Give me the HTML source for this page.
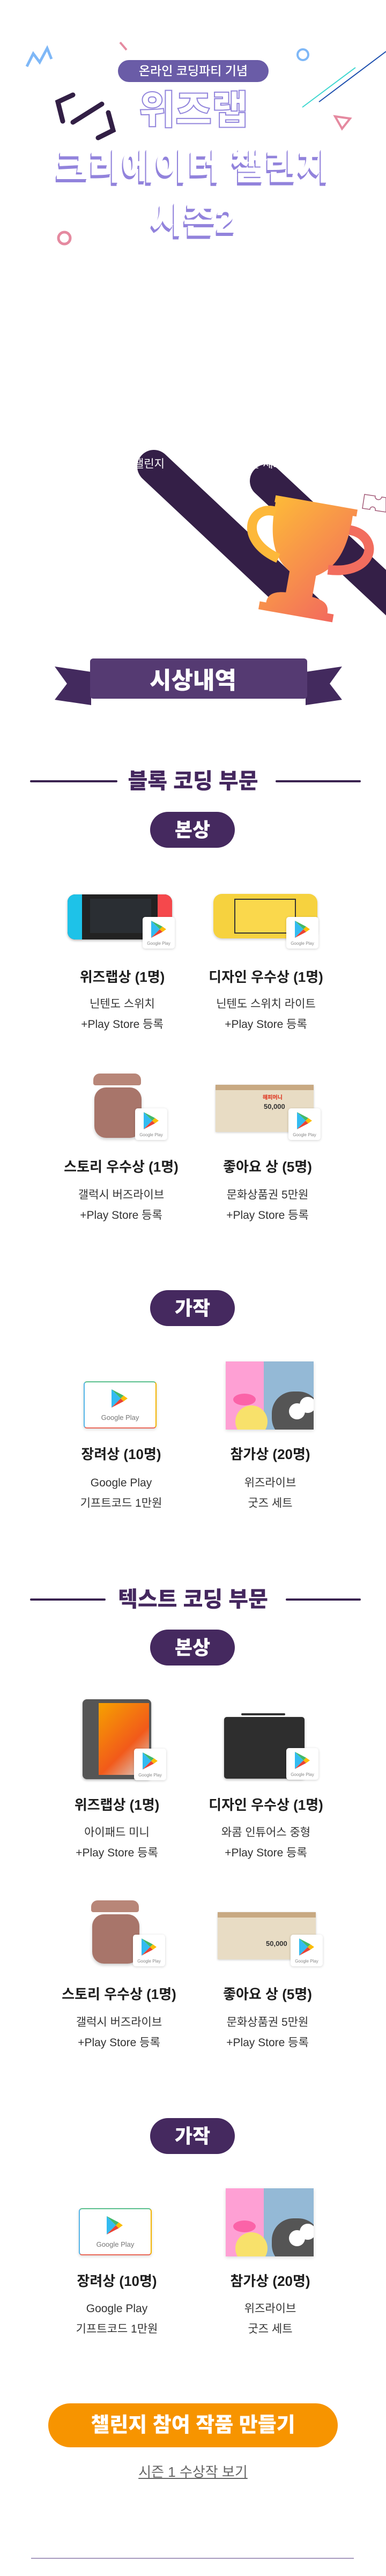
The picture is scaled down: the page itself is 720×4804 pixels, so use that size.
<!DOCTYPE html>
<html><head><meta charset="utf-8">
<style>
*{margin:0;padding:0;box-sizing:border-box}
body{width:720px;height:4804px;background:#fff;position:relative;overflow:hidden;font-family:"Liberation Sans","Noto Sans CJK KR",sans-serif}
.a{position:absolute}
.t{position:absolute;width:340px;text-align:center;font-weight:700;font-size:26px;line-height:34px;color:#1e1e1e;white-space:nowrap}
.d{position:absolute;width:340px;text-align:center;font-size:21px;line-height:38px;color:#333;white-space:nowrap}
.pill{position:absolute;left:280px;width:158px;height:67px;border-radius:34px;background:#45295f;color:#fff;font-weight:900;font-size:36px;line-height:67px;text-align:center}
.h{position:absolute;left:0;width:720px;text-align:center;font-weight:900;font-size:40px;color:#44275e;line-height:44px}
.ln{position:absolute;height:4px;background:#3a2350;border-radius:2px}
.gp{position:absolute;width:60px;height:59px;background:#fff;border-radius:5px;box-shadow:0 1px 5px rgba(0,0,0,.18)}
.gp svg{position:absolute;left:16px;top:7px}
.gp span{position:absolute;left:0;width:60px;bottom:5px;text-align:center;font-size:8px;color:#888}
.card{position:absolute;width:136px;height:88px;border-radius:6px;background:#fff;border:2px solid;border-color:#5ac18e #f4b400 #ea6a5a #54b5e8;box-shadow:0 2px 6px rgba(0,0,0,.15)}
.card span{position:absolute;width:100%;top:58px;text-align:center;font-size:13px;color:#777}
.wl{position:absolute;width:164px;height:127px;box-shadow:0 2px 6px rgba(0,0,0,.15);overflow:hidden}
</style></head><body>

<svg class="a" style="left:0;top:0" width="720" height="1200">
<defs>
<linearGradient id="tg" x1="0" y1="0" x2="1" y2="1"><stop offset="0" stop-color="#fdbb38"/><stop offset="1" stop-color="#f2665f"/></linearGradient>
<clipPath id="c1"><rect x="0" y="0" width="720" height="1130"/></clipPath>
<clipPath id="c2"><rect x="0" y="0" width="720" height="1165"/></clipPath>
</defs>
<polyline points="50,124 62,100 74,116 88,90 96,110" fill="none" stroke="#7fb8f7" stroke-width="5"/>
<line x1="224" y1="79" x2="236" y2="93" stroke="#e58aa0" stroke-width="4"/>
<circle cx="565" cy="102" r="10" fill="none" stroke="#7fb8f7" stroke-width="4"/>
<line x1="564" y1="200" x2="663" y2="126" stroke="#3fd7d0" stroke-width="2"/>
<line x1="595" y1="190" x2="720" y2="96" stroke="#1d4fae" stroke-width="2"/>
<polygon points="625,217 653,221 638,240" fill="none" stroke="#e58aa0" stroke-width="4"/>
<circle cx="120" cy="444" r="11" fill="none" stroke="#e58aa0" stroke-width="5"/>
<g stroke="#321f45" stroke-width="9" stroke-linecap="round" fill="none">
<polyline points="136,177 108,190 117,226"/>
<line x1="190" y1="194" x2="136" y2="228"/>
<polyline points="202,210 211,243 183,257"/>
</g>
<g clip-path="url(#c1)"><line x1="287" y1="870" x2="700" y2="1258" stroke="#341f47" stroke-width="62" stroke-linecap="round"/></g>
<g clip-path="url(#c2)"><line x1="497" y1="897" x2="800" y2="1180" stroke="#341f47" stroke-width="62" stroke-linecap="round"/></g>
<text x="245" y="872" fill="#fff" font-size="21" font-family="Liberation Sans,Noto Sans CJK KR,sans-serif">'챌린지 </text>
<text x="465" y="872" fill="#fff" font-size="21" font-family="Liberation Sans,Noto Sans CJK KR,sans-serif">를 체크</text>
<path d="M680,922 L700,925 C698,932 710,935 712,927 L720,928 L720,955 L700,952 C702,944 690,943 690,950 L676,948 Z" fill="none" stroke="#a35a78" stroke-width="1.5"/>
<g transform="rotate(10 570 1040)">
<path d="M495,935 L650,935 L650,948 L643,948 C645,1010 630,1050 595,1070 L595,1110 C620,1112 628,1120 628,1135 L640,1135 L640,1150 L500,1150 L500,1135 L512,1135 C512,1120 522,1112 545,1110 L545,1070 C510,1050 496,1010 497,948 L495,948 Z" fill="url(#tg)"/>
<path d="M500,965 C450,960 440,1030 520,1050" fill="none" stroke="#fdb83a" stroke-width="18"/>
<path d="M642,975 C700,975 705,1050 615,1055" fill="none" stroke="#f26d5e" stroke-width="18"/>
</g>
</svg>

<div class="a" style="left:220px;top:112px;width:281px;height:41px;border-radius:21px;background:#6a5ca7;color:#fff;font-size:23px;line-height:41px;text-align:center;font-weight:500">온라인 코딩파티 기념</div>
<div class="a" style="left:236px;top:164px;width:250px;text-align:center;font-size:74px;line-height:84px;font-weight:900;color:#fff;-webkit-text-stroke:2px #9285dc">위즈랩</div>
<div class="a" style="left:0;top:266px;width:720px;text-align:center;font-size:66px;line-height:90px;font-weight:900;color:#fff;letter-spacing:1px;text-shadow:-1px 2px 0 #9283dc,-2px 4px 0 #9283dc,-2px 6px 0 #9283dc">크리에이터 챌린지</div>
<div class="a" style="left:0;top:366px;width:720px;text-align:center;font-size:66px;line-height:90px;font-weight:900;color:#fff;text-shadow:-1px 2px 0 #9283dc,-2px 4px 0 #9283dc,-2px 6px 0 #9283dc">시즌2</div>

<!-- banner -->
<svg class="a" style="left:100px;top:1225px" width="540" height="95">
<polygon points="2,18 70,28 70,90 2,80 25,50" fill="#432a5e"/>
<polygon points="538,18 470,28 470,90 538,80 515,50" fill="#432a5e"/>
<rect x="68" y="3" width="405" height="75" rx="6" fill="#553a72"/>
</svg>
<div class="a" style="left:0;top:1240px;width:720px;text-align:center;font-size:44px;line-height:60px;font-weight:900;color:#fff">시상내역</div>

<!-- block section -->
<div class="ln" style="left:56px;width:163px;top:1455px"></div>
<div class="ln" style="left:514px;width:159px;top:1455px"></div>
<div class="h" style="top:1435px">블록 코딩 부문</div>
<div class="pill" style="top:1514px">본상</div>

<!-- switch -->
<div class="a" style="left:126px;top:1668px;width:195px;height:84px;border-radius:14px;background:#222;box-shadow:0 2px 5px rgba(0,0,0,.3)"></div>
<div class="a" style="left:126px;top:1668px;width:27px;height:84px;border-radius:14px 0 0 14px;background:#1ec2e8"></div>
<div class="a" style="left:294px;top:1668px;width:27px;height:84px;border-radius:0 14px 14px 0;background:#f5484c"></div>
<div class="a" style="left:168px;top:1676px;width:114px;height:64px;background:#2a2e33"></div>
<div class="gp" style="left:266px;top:1710px"><svg width="28" height="32" viewBox="0 0 28 32"><polygon points="0,0 0,32 16,16" fill="#32bbf1"/><polygon points="0,0 21,11 16,16" fill="#42b96a"/><polygon points="0,32 21,21 16,16" fill="#ea4335"/><polygon points="21,11 28,16 21,21 16,16" fill="#fbbc04"/></svg><span>Google Play</span></div>

<div class="a" style="left:398px;top:1667px;width:194px;height:83px;border-radius:16px;background:#f6d23f;box-shadow:0 2px 5px rgba(0,0,0,.2)"></div>
<div class="a" style="left:437px;top:1676px;width:115px;height:65px;background:#fad84c;border:2px solid #333"></div>
<div class="gp" style="left:534px;top:1710px"><svg width="28" height="32" viewBox="0 0 28 32"><polygon points="0,0 0,32 16,16" fill="#32bbf1"/><polygon points="0,0 21,11 16,16" fill="#42b96a"/><polygon points="0,32 21,21 16,16" fill="#ea4335"/><polygon points="21,11 28,16 21,21 16,16" fill="#fbbc04"/></svg><span>Google Play</span></div>

<div class="t" style="left:58px;top:1805px">위즈랩상 (1명)</div>
<div class="t" style="left:326px;top:1805px">디자인 우수상 (1명)</div>
<div class="d" style="left:58px;top:1854px">닌텐도 스위치<br>+Play Store 등록</div>
<div class="d" style="left:326px;top:1854px">닌텐도 스위치 라이트<br>+Play Store 등록</div>

<!-- buds -->
<div class="a" style="left:174px;top:2002px;width:89px;height:22px;border-radius:12px 12px 4px 4px;background:#b88678"></div>
<div class="a" style="left:176px;top:2028px;width:88px;height:94px;border-radius:22px;background:#a8756a;box-shadow:0 3px 6px rgba(0,0,0,.2)"></div>
<div class="gp" style="left:252px;top:2067px"><svg width="28" height="32" viewBox="0 0 28 32"><polygon points="0,0 0,32 16,16" fill="#32bbf1"/><polygon points="0,0 21,11 16,16" fill="#42b96a"/><polygon points="0,32 21,21 16,16" fill="#ea4335"/><polygon points="21,11 28,16 21,21 16,16" fill="#fbbc04"/></svg><span>Google Play</span></div>
<div class="a" style="left:402px;top:2023px;width:183px;height:88px;background:#e8dcc4;box-shadow:0 1px 4px rgba(0,0,0,.2)"></div>
<div class="a" style="left:402px;top:2023px;width:183px;height:10px;background:#c8a982"></div>
<div class="a" style="left:490px;top:2038px;font-size:10px;font-weight:900;color:#e0442e">해피머니</div>
<div class="a" style="left:492px;top:2056px;font-size:13px;font-weight:900;color:#333">50,000</div>
<div class="gp" style="left:538px;top:2067px"><svg width="28" height="32" viewBox="0 0 28 32"><polygon points="0,0 0,32 16,16" fill="#32bbf1"/><polygon points="0,0 21,11 16,16" fill="#42b96a"/><polygon points="0,32 21,21 16,16" fill="#ea4335"/><polygon points="21,11 28,16 21,21 16,16" fill="#fbbc04"/></svg><span>Google Play</span></div>

<div class="t" style="left:56px;top:2159px">스토리 우수상 (1명)</div>
<div class="t" style="left:329px;top:2159px">좋아요 상 (5명)</div>
<div class="d" style="left:56px;top:2210px">갤럭시 버즈라이브<br>+Play Store 등록</div>
<div class="d" style="left:329px;top:2210px">문화상품권 5만원<br>+Play Store 등록</div>

<div class="pill" style="top:2406px">가작</div>
<div class="card" style="left:156px;top:2576px"><svg class="a" style="left:50px;top:10px" width="30" height="40" viewBox="0 0 28 32"><polygon points="0,0 0,32 16,16" fill="#32bbf1"/><polygon points="0,0 21,11 16,16" fill="#42b96a"/><polygon points="0,32 21,21 16,16" fill="#ea4335"/><polygon points="21,11 28,16 21,21 16,16" fill="#fbbc04"/></svg><span>Google Play</span></div>
<div class="wl" style="left:421px;top:2539px"><div class="a" style="left:0;top:0;width:71px;height:127px;background:#fea0d4"></div><div class="a" style="left:71px;top:0;width:93px;height:127px;background:#94b9d6"></div><div class="a" style="left:18px;top:82px;width:60px;height:60px;border-radius:50%;background:#f8e16b"></div><div class="a" style="left:14px;top:60px;width:42px;height:22px;border-radius:50%;background:#fb63a8"></div><div class="a" style="left:86px;top:56px;width:90px;height:90px;border-radius:45%;background:#555"></div><div class="a" style="left:118px;top:78px;width:30px;height:30px;border-radius:50%;background:#fff"></div><div class="a" style="left:138px;top:66px;width:30px;height:30px;border-radius:50%;background:#fff"></div></div>
<div class="t" style="left:56px;top:2695px">장려상 (10명)</div>
<div class="t" style="left:334px;top:2695px">참가상 (20명)</div>
<div class="d" style="left:56px;top:2747px">Google Play<br>기프트코드 1만원</div>
<div class="d" style="left:334px;top:2747px">위즈라이브<br>굿즈 세트</div>

<!-- text section -->
<div class="ln" style="left:56px;width:141px;top:2981px"></div>
<div class="ln" style="left:533px;width:140px;top:2981px"></div>
<div class="h" style="top:2961px">텍스트 코딩 부문</div>
<div class="pill" style="top:3039px">본상</div>

<div class="a" style="left:154px;top:3169px;width:128px;height:149px;border-radius:8px;background:#555;box-shadow:0 2px 5px rgba(0,0,0,.3)"></div>
<div class="a" style="left:184px;top:3176px;width:94px;height:134px;background:linear-gradient(135deg,#f6a100,#f25a1a 60%,#d8d8d8)"></div>
<div class="gp" style="left:250px;top:3261px"><svg width="28" height="32" viewBox="0 0 28 32"><polygon points="0,0 0,32 16,16" fill="#32bbf1"/><polygon points="0,0 21,11 16,16" fill="#42b96a"/><polygon points="0,32 21,21 16,16" fill="#ea4335"/><polygon points="21,11 28,16 21,21 16,16" fill="#fbbc04"/></svg><span>Google Play</span></div>
<div class="a" style="left:450px;top:3195px;width:82px;height:4px;border-radius:2px;background:#333"></div>
<div class="a" style="left:418px;top:3202px;width:150px;height:115px;border-radius:5px;background:#2e2e2e;box-shadow:0 2px 5px rgba(0,0,0,.3)"></div>
<div class="gp" style="left:534px;top:3260px"><svg width="28" height="32" viewBox="0 0 28 32"><polygon points="0,0 0,32 16,16" fill="#32bbf1"/><polygon points="0,0 21,11 16,16" fill="#42b96a"/><polygon points="0,32 21,21 16,16" fill="#ea4335"/><polygon points="21,11 28,16 21,21 16,16" fill="#fbbc04"/></svg><span>Google Play</span></div>
<div class="t" style="left:48px;top:3349px">위즈랩상 (1명)</div>
<div class="t" style="left:326px;top:3349px">디자인 우수상 (1명)</div>
<div class="d" style="left:48px;top:3399px">아이패드 미니<br>+Play Store 등록</div>
<div class="d" style="left:326px;top:3399px">와콤 인튜어스 중형<br>+Play Store 등록</div>

<div class="a" style="left:170px;top:3544px;width:89px;height:22px;border-radius:12px 12px 4px 4px;background:#b88678"></div>
<div class="a" style="left:172px;top:3570px;width:88px;height:92px;border-radius:22px;background:#a8756a;box-shadow:0 3px 6px rgba(0,0,0,.2)"></div>
<div class="gp" style="left:248px;top:3608px"><svg width="28" height="32" viewBox="0 0 28 32"><polygon points="0,0 0,32 16,16" fill="#32bbf1"/><polygon points="0,0 21,11 16,16" fill="#42b96a"/><polygon points="0,32 21,21 16,16" fill="#ea4335"/><polygon points="21,11 28,16 21,21 16,16" fill="#fbbc04"/></svg><span>Google Play</span></div>
<div class="a" style="left:406px;top:3566px;width:183px;height:88px;background:#e8dcc4;box-shadow:0 1px 4px rgba(0,0,0,.2)"></div>
<div class="a" style="left:406px;top:3566px;width:183px;height:10px;background:#c8a982"></div>
<div class="a" style="left:496px;top:3617px;font-size:13px;font-weight:900;color:#333">50,000</div>
<div class="gp" style="left:542px;top:3608px"><svg width="28" height="32" viewBox="0 0 28 32"><polygon points="0,0 0,32 16,16" fill="#32bbf1"/><polygon points="0,0 21,11 16,16" fill="#42b96a"/><polygon points="0,32 21,21 16,16" fill="#ea4335"/><polygon points="21,11 28,16 21,21 16,16" fill="#fbbc04"/></svg><span>Google Play</span></div>
<div class="t" style="left:52px;top:3702px">스토리 우수상 (1명)</div>
<div class="t" style="left:329px;top:3702px">좋아요 상 (5명)</div>
<div class="d" style="left:52px;top:3753px">갤럭시 버즈라이브<br>+Play Store 등록</div>
<div class="d" style="left:329px;top:3753px">문화상품권 5만원<br>+Play Store 등록</div>

<div class="pill" style="top:3950px">가작</div>
<div class="card" style="left:147px;top:4118px"><svg class="a" style="left:50px;top:10px" width="30" height="40" viewBox="0 0 28 32"><polygon points="0,0 0,32 16,16" fill="#32bbf1"/><polygon points="0,0 21,11 16,16" fill="#42b96a"/><polygon points="0,32 21,21 16,16" fill="#ea4335"/><polygon points="21,11 28,16 21,21 16,16" fill="#fbbc04"/></svg><span>Google Play</span></div>
<div class="wl" style="left:421px;top:4081px"><div class="a" style="left:0;top:0;width:71px;height:127px;background:#fea0d4"></div><div class="a" style="left:71px;top:0;width:93px;height:127px;background:#94b9d6"></div><div class="a" style="left:18px;top:82px;width:60px;height:60px;border-radius:50%;background:#f8e16b"></div><div class="a" style="left:14px;top:60px;width:42px;height:22px;border-radius:50%;background:#fb63a8"></div><div class="a" style="left:86px;top:56px;width:90px;height:90px;border-radius:45%;background:#555"></div><div class="a" style="left:118px;top:78px;width:30px;height:30px;border-radius:50%;background:#fff"></div><div class="a" style="left:138px;top:66px;width:30px;height:30px;border-radius:50%;background:#fff"></div></div>
<div class="t" style="left:48px;top:4237px">장려상 (10명)</div>
<div class="t" style="left:334px;top:4237px">참가상 (20명)</div>
<div class="d" style="left:48px;top:4287px">Google Play<br>기프트코드 1만원</div>
<div class="d" style="left:334px;top:4287px">위즈라이브<br>굿즈 세트</div>

<div class="a" style="left:90px;top:4482px;width:540px;height:82px;border-radius:41px;background:#f79400;color:#fff;font-weight:900;font-size:38px;line-height:82px;text-align:center">챌린지 참여 작품 만들기</div>
<div class="a" style="left:0;top:4592px;width:720px;text-align:center;font-size:26px;line-height:36px;color:#666;text-decoration:underline">시즌 1 수상작 보기</div>
<div class="a" style="left:58px;top:4770px;width:602px;height:2px;background:#a79bbf"></div>
</body></html>
